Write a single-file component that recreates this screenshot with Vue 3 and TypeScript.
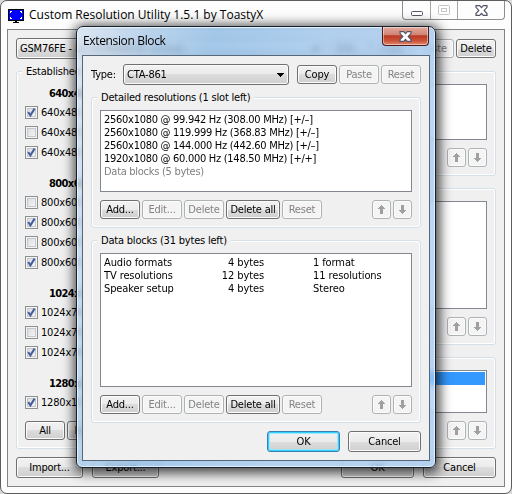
<script setup lang="ts">
interface Mode { label: string; on: boolean }
interface Group { title: string; modes: Mode[] }

const groups: Group[] = [
  { title: '640x480', modes: [
    { label: '640x480 @ 60 Hz', on: true },
    { label: '640x480 @ 72 Hz', on: false },
    { label: '640x480 @ 75 Hz', on: true },
  ] },
  { title: '800x600', modes: [
    { label: '800x600 @ 56 Hz', on: false },
    { label: '800x600 @ 60 Hz', on: true },
    { label: '800x600 @ 72 Hz', on: false },
    { label: '800x600 @ 75 Hz', on: true },
  ] },
  { title: '1024x768', modes: [
    { label: '1024x768 @ 60 Hz', on: true },
    { label: '1024x768 @ 70 Hz', on: false },
    { label: '1024x768 @ 75 Hz', on: true },
  ] },
  { title: '1280x1024', modes: [{ label: '1280x1024 @ 75 Hz', on: true }] },
]

const detailed: string[] = [
  '2560x1080 @ 99.942 Hz (308.00 MHz) [+/–]',
  '2560x1080 @ 119.999 Hz (368.83 MHz) [+/–]',
  '2560x1080 @ 144.000 Hz (442.60 MHz) [+/–]',
  '1920x1080 @ 60.000 Hz (148.50 MHz) [+/+]',
]

const blocks = [
  { name: 'Audio formats', size: 4, info: '1 format' },
  { name: 'TV resolutions', size: 12, info: '11 resolutions' },
  { name: 'Speaker setup', size: 4, info: 'Stereo' },
]

const actions = [
  { label: 'Add...', off: false, wide: false },
  { label: 'Edit...', off: true, wide: false },
  { label: 'Delete', off: true, wide: false },
  { label: 'Delete all', off: false, wide: true },
  { label: 'Reset', off: true, wide: false },
]

const panels = ['first', 'second', 'third']
const UP = 'M3 0h1v1h1v1h1v1h1v1H5v5H2V4H0V3h1V2h1V1h1z'
const DOWN = 'M2 0h3v5h2v1H6v1H5v1H4v1H3V8H2V7H1V6H0V5h2z'
const arrows = [UP, DOWN]
const CARET = 'M0 0h7v1H6v1H5v1H4v1H3V3H2V2H1V1H0z'
const CROSS = 'M1 .7h3.7l1.8 2 1.8-2H12v1.6L9.2 5.4 12 8.6v1.7H8.3l-1.8-2-1.8 2H1V8.6l2.8-3.2L1 2.3z'
</script>

<template>
  <div class="desktop">
    <div class="main-win">
      <div class="main-title">
        <svg class="app-icon" width="16" height="14" viewBox="0 0 16 14" shape-rendering="crispEdges">
          <path d="M0 0h16v12H9v1h2v1H5v-1h2v-1H0z" fill="#000" />
          <path d="M1 1h14v10H1z" fill="#00f" />
          <path d="M2 2h2v1H3v1H2zM12 2h2v2h-1V3h-1zM2 8h1v1h1v1H2zM13 8h1v2h-2V9h1z" fill="#fff" />
        </svg>
        <span class="title-text">Custom Resolution Utility 1.5.1 by ToastyX</span>
        <div class="caption">
          <span class="cap min"><svg width="12" height="5"><rect x=".5" y=".5" width="11" height="4" rx="1" fill="#fff" stroke="#535666" /></svg></span>
          <span class="cap max"><svg width="12" height="10"><rect x=".5" y=".5" width="11" height="9" rx="1" fill="#fff" stroke="#c5c5c8" /><rect x="3.5" y="3.5" width="5" height="3" fill="#fff" stroke="#c5c5c8" /></svg></span>
          <span class="cap close"><svg width="13" height="11" viewBox="0 0 13 11"><path :d="CROSS" fill="#fff" stroke="#535666" stroke-width="1.2" /></svg></span>
        </div>
      </div>
      <div class="main-client">
        <div class="top-row">
          <div class="combo"><span>GSM76FE - LG ULTRAWIDE (active)</span><svg width="7" height="4" shape-rendering="crispEdges"><path :d="CARET" /></svg></div>
          <button class="btn">Edit...</button>
          <button class="btn">Copy</button>
          <button class="btn off">Paste</button>
          <button class="btn">Delete</button>
        </div>
        <div class="columns">
          <section class="group established">
            <h3 class="legend">Established resolutions</h3>
            <div v-for="g in groups" :key="g.title" class="modes">
              <div class="mode-title">{{ g.title }}</div>
              <div v-for="m in g.modes" :key="m.label" class="mode">
                <span class="check">
                  <svg v-if="m.on" width="9" height="9" viewBox="0 0 9 9"><path d="M1.2 4l2.2 3.4L7.6.6" fill="none" stroke="#465c9b" stroke-width="2" /></svg>
                </span>
                <span>{{ m.label }}</span>
              </div>
            </div>
            <div class="all-row"><button class="btn">All</button><button class="btn">None</button></div>
          </section>
          <div class="right">
            <section v-for="p in panels" :key="p" class="group" :class="p">
              <div class="list"><div v-if="p === 'third'" class="selected"></div></div>
              <div class="tools end">
                <button v-for="a in arrows" :key="a" class="btn off arrow"><svg width="7" height="9" shape-rendering="crispEdges"><path :d="a" fill="#a0a0a0" /></svg></button>
              </div>
            </section>
          </div>
        </div>
        <div class="footer">
          <button class="btn big">Import...</button>
          <button class="btn big">Export...</button>
          <button class="btn big wide ok">OK</button>
          <button class="btn big wide">Cancel</button>
        </div>
      </div>
    </div>

    <div class="dialog">
      <div class="dlg-title">
        <span class="title-text">Extension Block</span>
        <span class="dlg-close"><svg width="13" height="11" viewBox="0 0 13 11"><path :d="CROSS" fill="#fff" stroke="#535666" stroke-width="1.2" /></svg></span>
      </div>
      <div class="dlg-client">
        <div class="type-row">
          <span class="type-label">Type:</span>
          <div class="combo type"><span>CTA-861</span><svg width="7" height="4" shape-rendering="crispEdges"><path :d="CARET" /></svg></div>
          <button class="btn">Copy</button>
          <button class="btn off">Paste</button>
          <button class="btn off">Reset</button>
        </div>
        <section class="group detailed">
          <h3 class="legend">Detailed resolutions (1 slot left)</h3>
          <div class="list">
            <div v-for="d in detailed" :key="d" class="item">{{ d }}</div>
            <div class="item grey">Data blocks (5 bytes)</div>
          </div>
          <div class="tools">
            <button v-for="a in actions" :key="a.label" class="btn" :class="{ off: a.off, del: a.wide }">{{ a.label }}</button>
            <span class="fill"></span>
            <button v-for="a in arrows" :key="a" class="btn off arrow"><svg width="7" height="9" shape-rendering="crispEdges"><path :d="a" fill="#a0a0a0" /></svg></button>
          </div>
        </section>
        <section class="group blocks">
          <h3 class="legend">Data blocks (31 bytes left)</h3>
          <div class="list">
            <div v-for="b in blocks" :key="b.name" class="item cols">
              <span>{{ b.name }}</span><span class="num">{{ b.size }} bytes</span><span class="info">{{ b.info }}</span>
            </div>
          </div>
          <div class="tools">
            <button v-for="a in actions" :key="a.label" class="btn" :class="{ off: a.off, del: a.wide }">{{ a.label }}</button>
            <span class="fill"></span>
            <button v-for="a in arrows" :key="a" class="btn off arrow"><svg width="7" height="9" shape-rendering="crispEdges"><path :d="a" fill="#a0a0a0" /></svg></button>
          </div>
        </section>
        <div class="dlg-footer">
          <button class="btn big wide default">OK</button>
          <button class="btn big wide">Cancel</button>
        </div>
      </div>
    </div>
  </div>
</template>

<style>
body { background: #d9d9d9; overflow: hidden; }
</style>

<style scoped>
* { box-sizing: border-box; }
.desktop {
  position: relative; width: 512px; height: 494px; overflow: hidden;
  font: 11px/13px "DejaVu Sans Condensed", "DejaVu Sans", sans-serif;
  font-stretch: condensed; letter-spacing: -0.2px; color: #000; white-space: nowrap;
}
svg { display: block; flex: none; }
.main-win {
  position: absolute; left: 0; top: 0; width: 512px; height: 494px;
  border: 1px solid #5d5d5d; border-radius: 7px; background: #fdfdfd; padding: 0 6px 6px;
}
.main-title { display: flex; height: 28px; position: relative; }
.app-icon { margin: 8px 5px 0 1px; }
.title-text { font: 12px/16px "Open Sans", "Noto Sans", sans-serif; letter-spacing: 0; }
.main-title .title-text { margin-top: 6px; }
.caption { display: flex; margin-left: auto; height: 19px; border: 1px solid #8d8e91; border-top: 0; border-radius: 0 0 4px 4px; }
.cap { display: flex; align-items: center; justify-content: center; border-right: 1px solid #a5a6a8; }
.min { width: 28px; padding-top: 6px; }
.max { width: 27px; }
.close { width: 46px; border-right: 0; }
.main-client { height: 458px; border: 1px solid #838383; background: #f0f0f0; padding: 8px; }
.top-row { display: flex; align-items: center; gap: 2px; height: 21px; }
.combo {
  display: flex; align-items: center; justify-content: space-between; width: 308px; height: 21px; padding: 0 4px 0 3px; margin-right: 4px;
  border: 1px solid #707070; border-radius: 3px; box-shadow: inset 0 0 0 1px #fafafa;
  background: linear-gradient(#f2f2f2, #ebebeb 50%, #dddddd 50%, #cfcfcf);
}
.btn {
  display: flex; align-items: center; justify-content: center; flex: none;
  width: 40px; height: 19px; padding: 0; border: 1px solid #707070; border-radius: 3px;
  box-shadow: inset 0 0 0 1px #fcfcfc; background: linear-gradient(#f2f2f2, #ebebeb 50%, #dddddd 50%, #cfcfcf);
  font: inherit; letter-spacing: inherit; color: #000; font-stretch: condensed;
}
.btn.off { color: #838383; border-color: #adb2b5; background: #f4f4f4; }
.arrow { width: 19px; }
.big { width: 67px; height: 21px; }
.big.wide { width: 73px; }
.del { width: 54px; }
.columns { display: flex; gap: 9px; margin-top: 12px; }
.group { position: relative; border: 1px solid #d5dfe5; border-radius: 3px; box-shadow: inset 0 0 0 1px #fff; padding: 12px 8px 0; }
.legend { position: absolute; left: 5px; top: -7px; margin: 0; padding: 0 4px; background: #f0f0f0; font: inherit; font-stretch: condensed; }
.established { width: 190px; height: 378px; padding-top: 11px; }
.modes { margin-bottom: 10px; }
.mode-title { height: 20px; padding: 4px 0 0 24px; font-weight: bold; letter-spacing: -0.6px; }
.mode { display: flex; align-items: center; height: 20px; gap: 3px; padding-bottom: 2px; }
.check {
  display: flex; align-items: center; justify-content: center; width: 13px; height: 13px;
  border: 1px solid #8e8f8f; box-shadow: inset 0 0 0 1px #f4f4f4, inset 0 0 0 2px #c4c9cf; background: linear-gradient(135deg, #d5d8dc, #fafafa);
}
.all-row { display: flex; gap: 2px; margin-top: -2px; }
.right { display: flex; flex-direction: column; gap: 12px; flex: 1; }
.first { height: 105px; } .second { height: 157px; } .third { height: 92px; }
.list { border: 1px solid #828790; background: #fff; height: 82px; }
.first .list { height: 56px; } .second .list { height: 108px; } .third .list { height: 43px; padding: 1px; }
.selected { height: 13px; background: #3399ff; }
.tools { display: flex; gap: 2px; margin-top: 8px; }
.end { justify-content: flex-end; }
.fill { flex: 1; }
.footer { display: flex; gap: 9px; margin-top: 8px; }
.ok { margin-left: auto; }

.dialog {
  position: absolute; left: 76px; top: 26px; width: 360px; height: 442px; padding: 0 5px 6px;
  border: 1px solid #17212e; border-radius: 7px 7px 6px 6px;
  background: linear-gradient(100deg, rgba(216, 230, 245, .75) 0, rgba(168, 203, 236, .75) 18%, rgba(140, 188, 232, .75) 32%, rgba(160, 200, 240, .75) 60%, rgba(165, 203, 243, .75) 100%);
  backdrop-filter: blur(3px);
  box-shadow: inset 0 0 0 1px rgba(236, 245, 253, .8), 1px 2px 12px 3px rgba(0, 0, 0, .72);
}
.dlg-title { display: flex; justify-content: space-between; height: 28px; padding-left: 1px; }
.dlg-title .title-text { margin-top: 6px; letter-spacing: -0.35px; }
.dlg-close {
  display: flex; align-items: center; justify-content: center; width: 47px; height: 19px; margin-right: 1px;
  border: 1px solid #4f1c1b; border-top: 0; border-radius: 0 0 4px 4px; box-shadow: inset 0 0 0 1px rgba(255, 255, 255, .45);
  background: linear-gradient(#e3aa9e, #d08272 45%, #b93a26 48%, #ca5136 75%, #df8a70);
}
.dlg-client { height: 406px; border: 1px solid #56677a; background: #f0f0f0; padding: 8px; }
.type-row { display: flex; align-items: center; gap: 2px; height: 21px; }
.type-label { width: 30px; }
.type { width: 166px; margin-right: 6px; }
.detailed { height: 131px; margin-top: 12px; }
.blocks { height: 183px; margin-top: 12px; }
.item { height: 13px; }
.detailed .list { padding: 2px 3px; letter-spacing: -0.28px; }
.blocks .list { height: 134px; padding: 2px 3px; letter-spacing: -0.1px; }
.grey { color: #808080; }
.cols { display: grid; grid-template-columns: 94px 66px 1fr; }
.num { text-align: right; }
.info { padding-left: 49px; }
.dlg-footer { display: flex; justify-content: flex-end; gap: 8px; margin-top: 8px; }
.default { border-color: #3c7fb1; box-shadow: inset 0 0 0 1px #35cfff, inset 0 0 0 2px #9ce6ff; }
</style>
